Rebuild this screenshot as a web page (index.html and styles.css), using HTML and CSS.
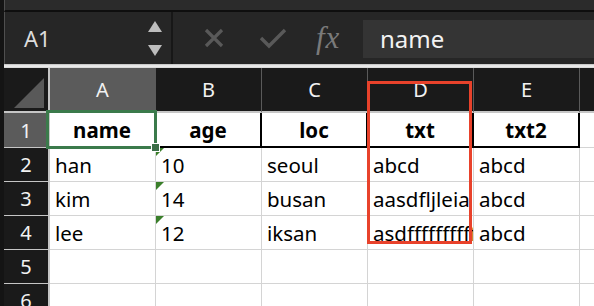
FILE: index.html
```html
<!DOCTYPE html>
<html lang="ko">
<head>
    <meta charset="UTF-8">
    <title>Sheet</title>
    <link rel="stylesheet" href="styles.css">
</head>
<body>

<div class="window">
    <div class="edge"></div>
    <div class="app">
        <div class="topbar"></div>

        <div class="formula-bar">
            <div class="name-box">
                <span class="cell-ref">A1</span>
                <svg class="spin" width="14" height="36" viewBox="0 0 14 36">
                    <polygon points="7,0 14,11 0,11" fill="#bdbdbd"/>
                    <polygon points="0,24 14,24 7,35" fill="#bdbdbd"/>
                </svg>
            </div>
            <div class="actions">
                <svg class="icon-x" width="20" height="20" viewBox="0 0 20 20">
                    <path d="M2 2 L18 18 M18 2 L2 18" stroke="#595959" stroke-width="3.2" fill="none"/>
                </svg>
                <svg class="icon-check" width="28" height="22" viewBox="0 0 28 22">
                    <path d="M2 11 L10 19 L26 3" stroke="#595959" stroke-width="3.4" fill="none"/>
                </svg>
                <span class="fx">fx</span>
            </div>
            <div class="formula-input">name</div>
        </div>

        <div class="divider"></div>

        <div class="sheet">
            <div class="corner">
                <svg width="30" height="30" viewBox="0 0 30 30">
                    <polygon points="30,0 30,30 0,30" fill="#595959"/>
                </svg>
            </div>
            <div class="col-head selected">A</div>
            <div class="col-head">B</div>
            <div class="col-head">C</div>
            <div class="col-head">D</div>
            <div class="col-head">E</div>
            <div class="col-head last"></div>

            <div class="row-head selected">1</div>
            <div class="cell title">name</div>
            <div class="cell title">age</div>
            <div class="cell title">loc</div>
            <div class="cell title">txt</div>
            <div class="cell title">txt2</div>
            <div class="cell last"></div>

            <div class="row-head">2</div>
            <div class="cell">han</div>
            <div class="cell flag">10</div>
            <div class="cell">seoul</div>
            <div class="cell">abcd</div>
            <div class="cell">abcd</div>
            <div class="cell last"></div>

            <div class="row-head">3</div>
            <div class="cell">kim</div>
            <div class="cell flag">14</div>
            <div class="cell">busan</div>
            <div class="cell">aasdfljleia</div>
            <div class="cell">abcd</div>
            <div class="cell last"></div>

            <div class="row-head">4</div>
            <div class="cell">lee</div>
            <div class="cell flag">12</div>
            <div class="cell">iksan</div>
            <div class="cell">asdfffffffffff</div>
            <div class="cell">abcd</div>
            <div class="cell last"></div>

            <div class="row-head">5</div>
            <div class="cell"></div>
            <div class="cell"></div>
            <div class="cell"></div>
            <div class="cell"></div>
            <div class="cell"></div>
            <div class="cell last"></div>

            <div class="row-head">6</div>
            <div class="cell"></div>
            <div class="cell"></div>
            <div class="cell"></div>
            <div class="cell"></div>
            <div class="cell"></div>
            <div class="cell last"></div>

            <!-- active cell A1 and the red mark over column D -->
            <div class="selection"><span class="handle"></span></div>
            <div class="mark"></div>
        </div>
    </div>
</div>

</body>
</html>
```

FILE: styles.css
```css
* {
    box-sizing: border-box;
}
body {
    margin: 0;
    background-color: #111;
    font-family: "Noto Sans", "Open Sans", sans-serif;
    overflow: hidden;
}
.window {
    display: flex;
    width: 594px;
    height: 306px;
    overflow: hidden;
}
.edge {
    width: 4px;
    background-color: #141414;
}
.app {
    flex: 1;
    min-width: 0;
}
.topbar {
    height: 12px;
    background-color: #2b2b2b;
    border-bottom: 2px solid #0e0e0e;
    border-left: 1px solid #4f4f4f;
}
.formula-bar {
    display: flex;
    height: 52px;
    background-color: #262626;
    border-left: 1px solid #4f4f4f;
}
.name-box {
    display: flex;
    align-items: center;
    justify-content: space-between;
    width: 168px;
    padding: 0 9px 0 19px;
    border-right: 2px solid #171717;
}
.cell-ref {
    color: #dcdcdc;
    font-size: 22px;
}
.spin {
    margin-top: 2px;
}
.actions {
    display: flex;
    align-items: center;
}
.icon-x {
    margin-left: 31px;
}
.icon-check {
    margin-left: 35px;
}
.fx {
    margin-left: 29px;
    width: 36px;
    color: #7a7a7a;
    font-family: "Liberation Serif", serif;
    font-style: italic;
    font-size: 31px;
    letter-spacing: 1px;
}
.formula-input {
    flex: 1;
    margin: 8px 0 6px 11px;
    padding-left: 17px;
    background-color: #343434;
    color: #f2f2f2;
    font-size: 24px;
    line-height: 37px;
}
.divider {
    height: 4px;
    background: linear-gradient(#bdbdbd, #f2f2f2 50%, #d2d2d2);
}
.sheet {
    position: relative;
    display: grid;
    grid-template-columns: 46px repeat(5, 106px) 1fr;
    grid-template-rows: 45px 35px repeat(5, 34px);
    background-color: #fff;
}
.corner {
    display: flex;
    align-items: flex-end;
    justify-content: flex-end;
    padding: 0 4px 3px 0;
    background-color: #1a1a1a;
    border-right: 2px solid #c6c6c6;
    border-bottom: 2px solid #c6c6c6;
}
.col-head {
    display: flex;
    align-items: center;
    justify-content: center;
    background-color: #1a1a1a;
    color: #f2f2f2;
    font-size: 20px;
    border-right: 1px solid #5a5a5a;
    border-bottom: 2px solid #c6c6c6;
}
.col-head.selected {
    background-color: #5b5b5b;
}
.col-head.last {
    border-right: none;
}
.row-head {
    display: flex;
    align-items: center;
    justify-content: center;
    background-color: #1a1a1a;
    color: #f2f2f2;
    font-size: 20px;
    border-right: 2px solid #c6c6c6;
    border-bottom: 1px solid #c6c6c6;
}
.row-head.selected {
    background-color: #5b5b5b;
}
.cell {
    position: relative;
    display: flex;
    align-items: center;
    padding-left: 5px;
    color: #000;
    font-size: 20.5px;
    white-space: nowrap;
    overflow: hidden;
    border-right: 1px solid #d4d4d4;
    border-bottom: 1px solid #d4d4d4;
}
.cell.last {
    border-right: none;
}
.cell.title {
    justify-content: center;
    padding-left: 0;
    font-weight: bold;
    border-right: 2px solid #000;
    border-bottom: 2px solid #000;
}
.cell.flag::before {
    content: "";
    position: absolute;
    top: 0;
    left: 0;
    border-top: 8px solid #3a7f2a;
    border-right: 8px solid transparent;
}
.selection {
    position: absolute;
    left: 42px;
    top: 42px;
    width: 111px;
    height: 39px;
    border: 3px solid #3b7a4b;
}
.handle {
    position: absolute;
    right: -6px;
    bottom: -6px;
    width: 9px;
    height: 9px;
    background-color: #3b6e47;
    border: 1px solid #fff;
}
.mark {
    position: absolute;
    left: 363px;
    top: 13px;
    width: 105px;
    height: 163px;
    border: 3px solid #e8422b;
}
```
